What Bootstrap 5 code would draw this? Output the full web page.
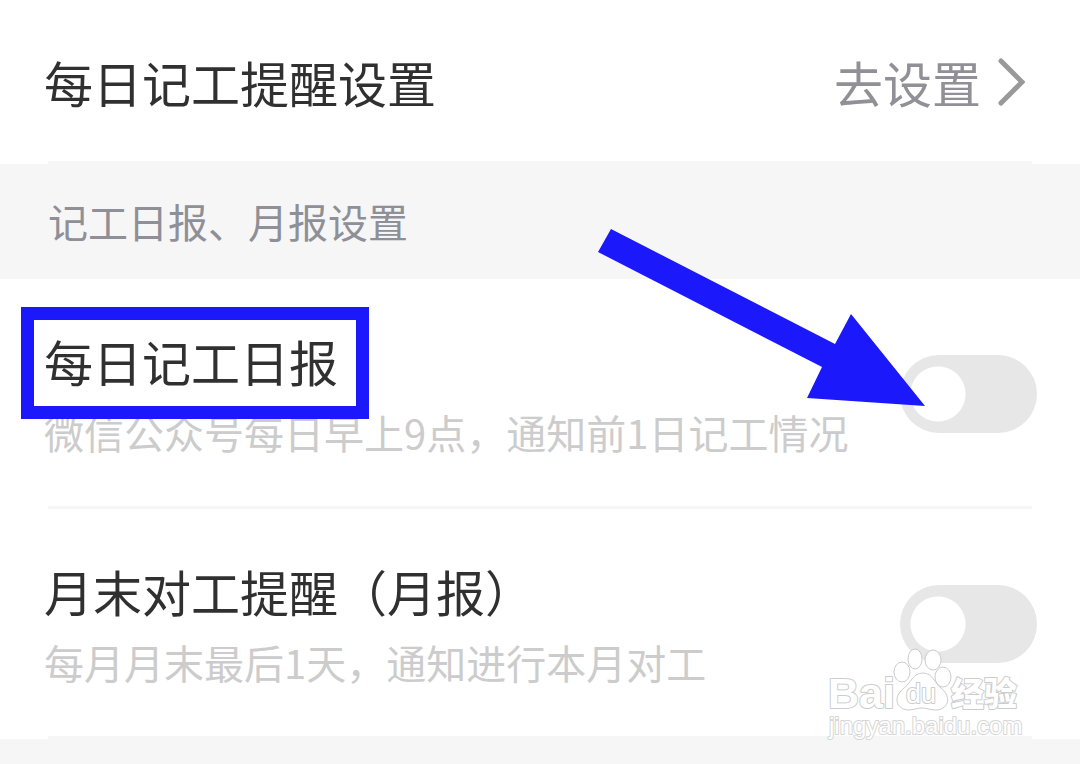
<!DOCTYPE html>
<html lang="zh-CN">
<head>
<meta charset="utf-8">
<meta name="viewport" content="width=device-width, initial-scale=1">
<title>记工提醒设置</title>
<link href="https://cdn.jsdelivr.net/npm/bootstrap@5.3.0/dist/css/bootstrap.min.css" rel="stylesheet">
<style>
body { background: #f6f6f6; color: #303030; font-family: "Noto Sans CJK SC", sans-serif; }
.setting-row { background: #fff; padding-right: 43px; padding-left: 44px; }
.setting-row::after { content: ""; position: absolute; bottom: 0; left: 48px; right: 48px; height: 3px; background: #f6f6f6; }
.row-single { padding-top: 46px; padding-bottom: 46px; }
.row-double { padding-top: 41px; padding-bottom: 41px; }
.setting-title { font-size: 49px; line-height: 72px; }
.row-double .setting-title { padding-top: 5px; }
.setting-note { font-size: 40px; line-height: 71px; color: #ccc; }
.go-link { color: #909096; gap: 16px; padding-right: 12px; }
.section-head { font-size: 40px; line-height: 115px; padding: 0 48px; color: #8f8f98; }
.form-switch .form-check-input.toggle {
  width: 137px; height: 78px; margin: 0; border: 0; border-radius: 39px;
  background: #e7e7e7 radial-gradient(circle at 38px 39px, #fff 27px, transparent 28px);
}
.mark-box { top: -13px; right: -31px; bottom: -22px; left: -23px; border: 13px solid #1c18fc; }
.arrow { top: -50px; right: 155px; z-index: 3; }
.watermark { right: 56px; bottom: -4px; z-index: 2; }
.watermark text { fill: #fff; stroke: #ccc; stroke-width: 2px; paint-order: stroke; stroke-linejoin: round; }
.watermark .site { stroke: #d6d6d6; }
.latin { font-family: "Liberation Sans", sans-serif; }
</style>
</head>
<body>
<main class="min-vh-100">
  <section class="setting-row row-single position-relative d-flex justify-content-between align-items-center">
    <div class="setting-title">每日记工提醒设置</div>
    <a href="#" class="go-link setting-title d-flex align-items-center text-decoration-none">去设置
      <svg width="28" height="50" viewBox="0 0 28 50" fill="none" stroke="#999" stroke-width="5" stroke-linecap="round" aria-hidden="true"><path d="M4 4 25 25 4 46"/></svg>
    </a>
  </section>

  <h2 class="section-head m-0 fw-normal">记工日报、月报设置</h2>

  <section class="setting-row row-double position-relative d-flex justify-content-between align-items-center">
    <div>
      <label for="daily" class="setting-title d-table position-relative">每日记工日报<span class="mark-box position-absolute z-1"></span></label>
      <div id="dailyNote" class="setting-note">微信公众号每日早上9点，通知前1日记工情况</div>
    </div>
    <div class="form-switch p-0"><input class="form-check-input toggle float-none d-block" type="checkbox" role="switch" id="daily" aria-describedby="dailyNote"></div>
    <svg class="arrow position-absolute" width="327" height="177" viewBox="0 0 327 177" fill="#1c18fc" aria-hidden="true"><path d="M13 0 237 115 253 85 327 177 209 169 224 138 0 23Z"/></svg>
  </section>

  <section class="setting-row row-double position-relative d-flex justify-content-between align-items-center">
    <div>
      <label for="monthly" class="setting-title d-table">月末对工提醒（月报）</label>
      <div id="monthlyNote" class="setting-note">每月月末最后1天，通知进行本月对工</div>
    </div>
    <div class="form-switch p-0"><input class="form-check-input toggle float-none d-block" type="checkbox" role="switch" id="monthly" aria-describedby="monthlyNote"></div>
    <svg class="watermark position-absolute" width="198" height="96" viewBox="0 0 198 96">
      <text class="latin" x="2" y="61" font-size="43" font-weight="700">Bai</text>
      <g fill="#fff" stroke="#ccc">
        <ellipse cx="76" cy="25" rx="8" ry="10"/>
        <ellipse cx="89" cy="12" rx="7" ry="10"/>
        <ellipse cx="107" cy="13" rx="8" ry="10"/>
        <ellipse cx="117" cy="30" rx="8" ry="10"/>
        <path d="M97 26C107 26 109 37 115 41 127 51 121 63 110 63 104 63 101 61 96 61 91 61 88 63 82 63 70 62 67 50 77 42 85 36 87 26 97 26Z"/>
      </g>
      <text class="latin" x="80" y="56" font-size="27">du</text>
      <text x="125" y="59" font-size="33" font-weight="900">经验</text>
      <text class="latin site" x="3" y="87" font-size="24">jingyan.baidu.com</text>
    </svg>
  </section>
</main>
<script src="https://cdn.jsdelivr.net/npm/bootstrap@5.3.0/dist/js/bootstrap.bundle.min.js"></script>
</body>
</html>
